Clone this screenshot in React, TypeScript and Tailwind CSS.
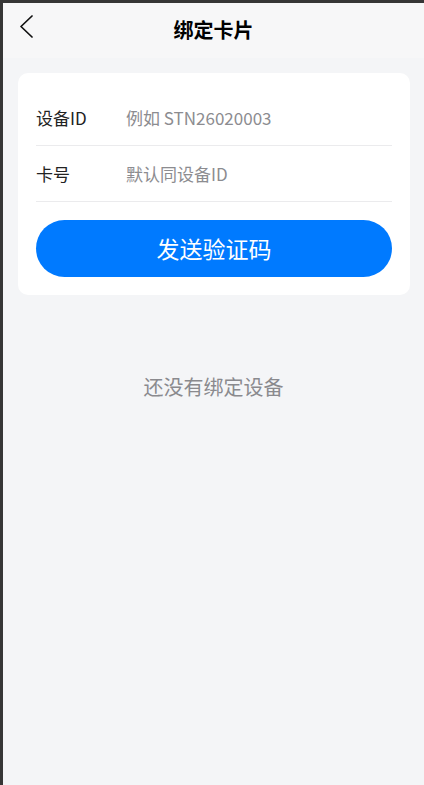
import React from "react";

export default function App() {
  const font = { fontFamily: '"Noto Sans CJK SC", "Noto Sans", sans-serif' };
  return (
    <div
      className="w-[424px] h-[785px] border-l-[3px] border-t-[3px] border-[#363636] bg-[#f4f5f7] flex flex-col overflow-hidden"
      style={font}
    >
      <div className="h-[55px] bg-[#f7f7f8] relative flex items-center justify-center shrink-0">
        <svg
          className="absolute left-[15px] top-[11px]"
          width="16"
          height="24"
          viewBox="0 0 16 24"
          fill="none"
        >
          <polyline
            points="14,2 3,12.5 14,23"
            stroke="#111"
            strokeWidth="1.7"
            strokeLinecap="round"
            strokeLinejoin="round"
          />
        </svg>
        <span className="text-[20px] font-bold text-black leading-none -mt-[1px]">绑定卡片</span>
      </div>

      <div className="mt-[15px] ml-[15px] mr-[14px] bg-white rounded-[10px] px-[18px] pt-[17px] pb-[18px]">
        <div className="h-[56px] flex items-center border-b border-[#ebebed]">
          <span className="w-[90px] text-[17px] text-[#222]">设备ID</span>
          <span className="text-[17px] text-[#8c8c90]">例如 STN26020003</span>
        </div>
        <div className="h-[56px] flex items-center border-b border-[#ebebed]">
          <span className="w-[90px] text-[17px] text-[#222]">卡号</span>
          <span className="text-[17px] text-[#8c8c90]">默认同设备ID</span>
        </div>
        <button className="mt-[18px] w-full h-[57px] rounded-full bg-[#007aff] text-white text-[23px] flex items-center justify-center">
          发送验证码
        </button>
      </div>

      <div className="mt-[77px] text-center text-[20px] text-[#8a8a8e] leading-[30px]">
        还没有绑定设备
      </div>
    </div>
  );
}
